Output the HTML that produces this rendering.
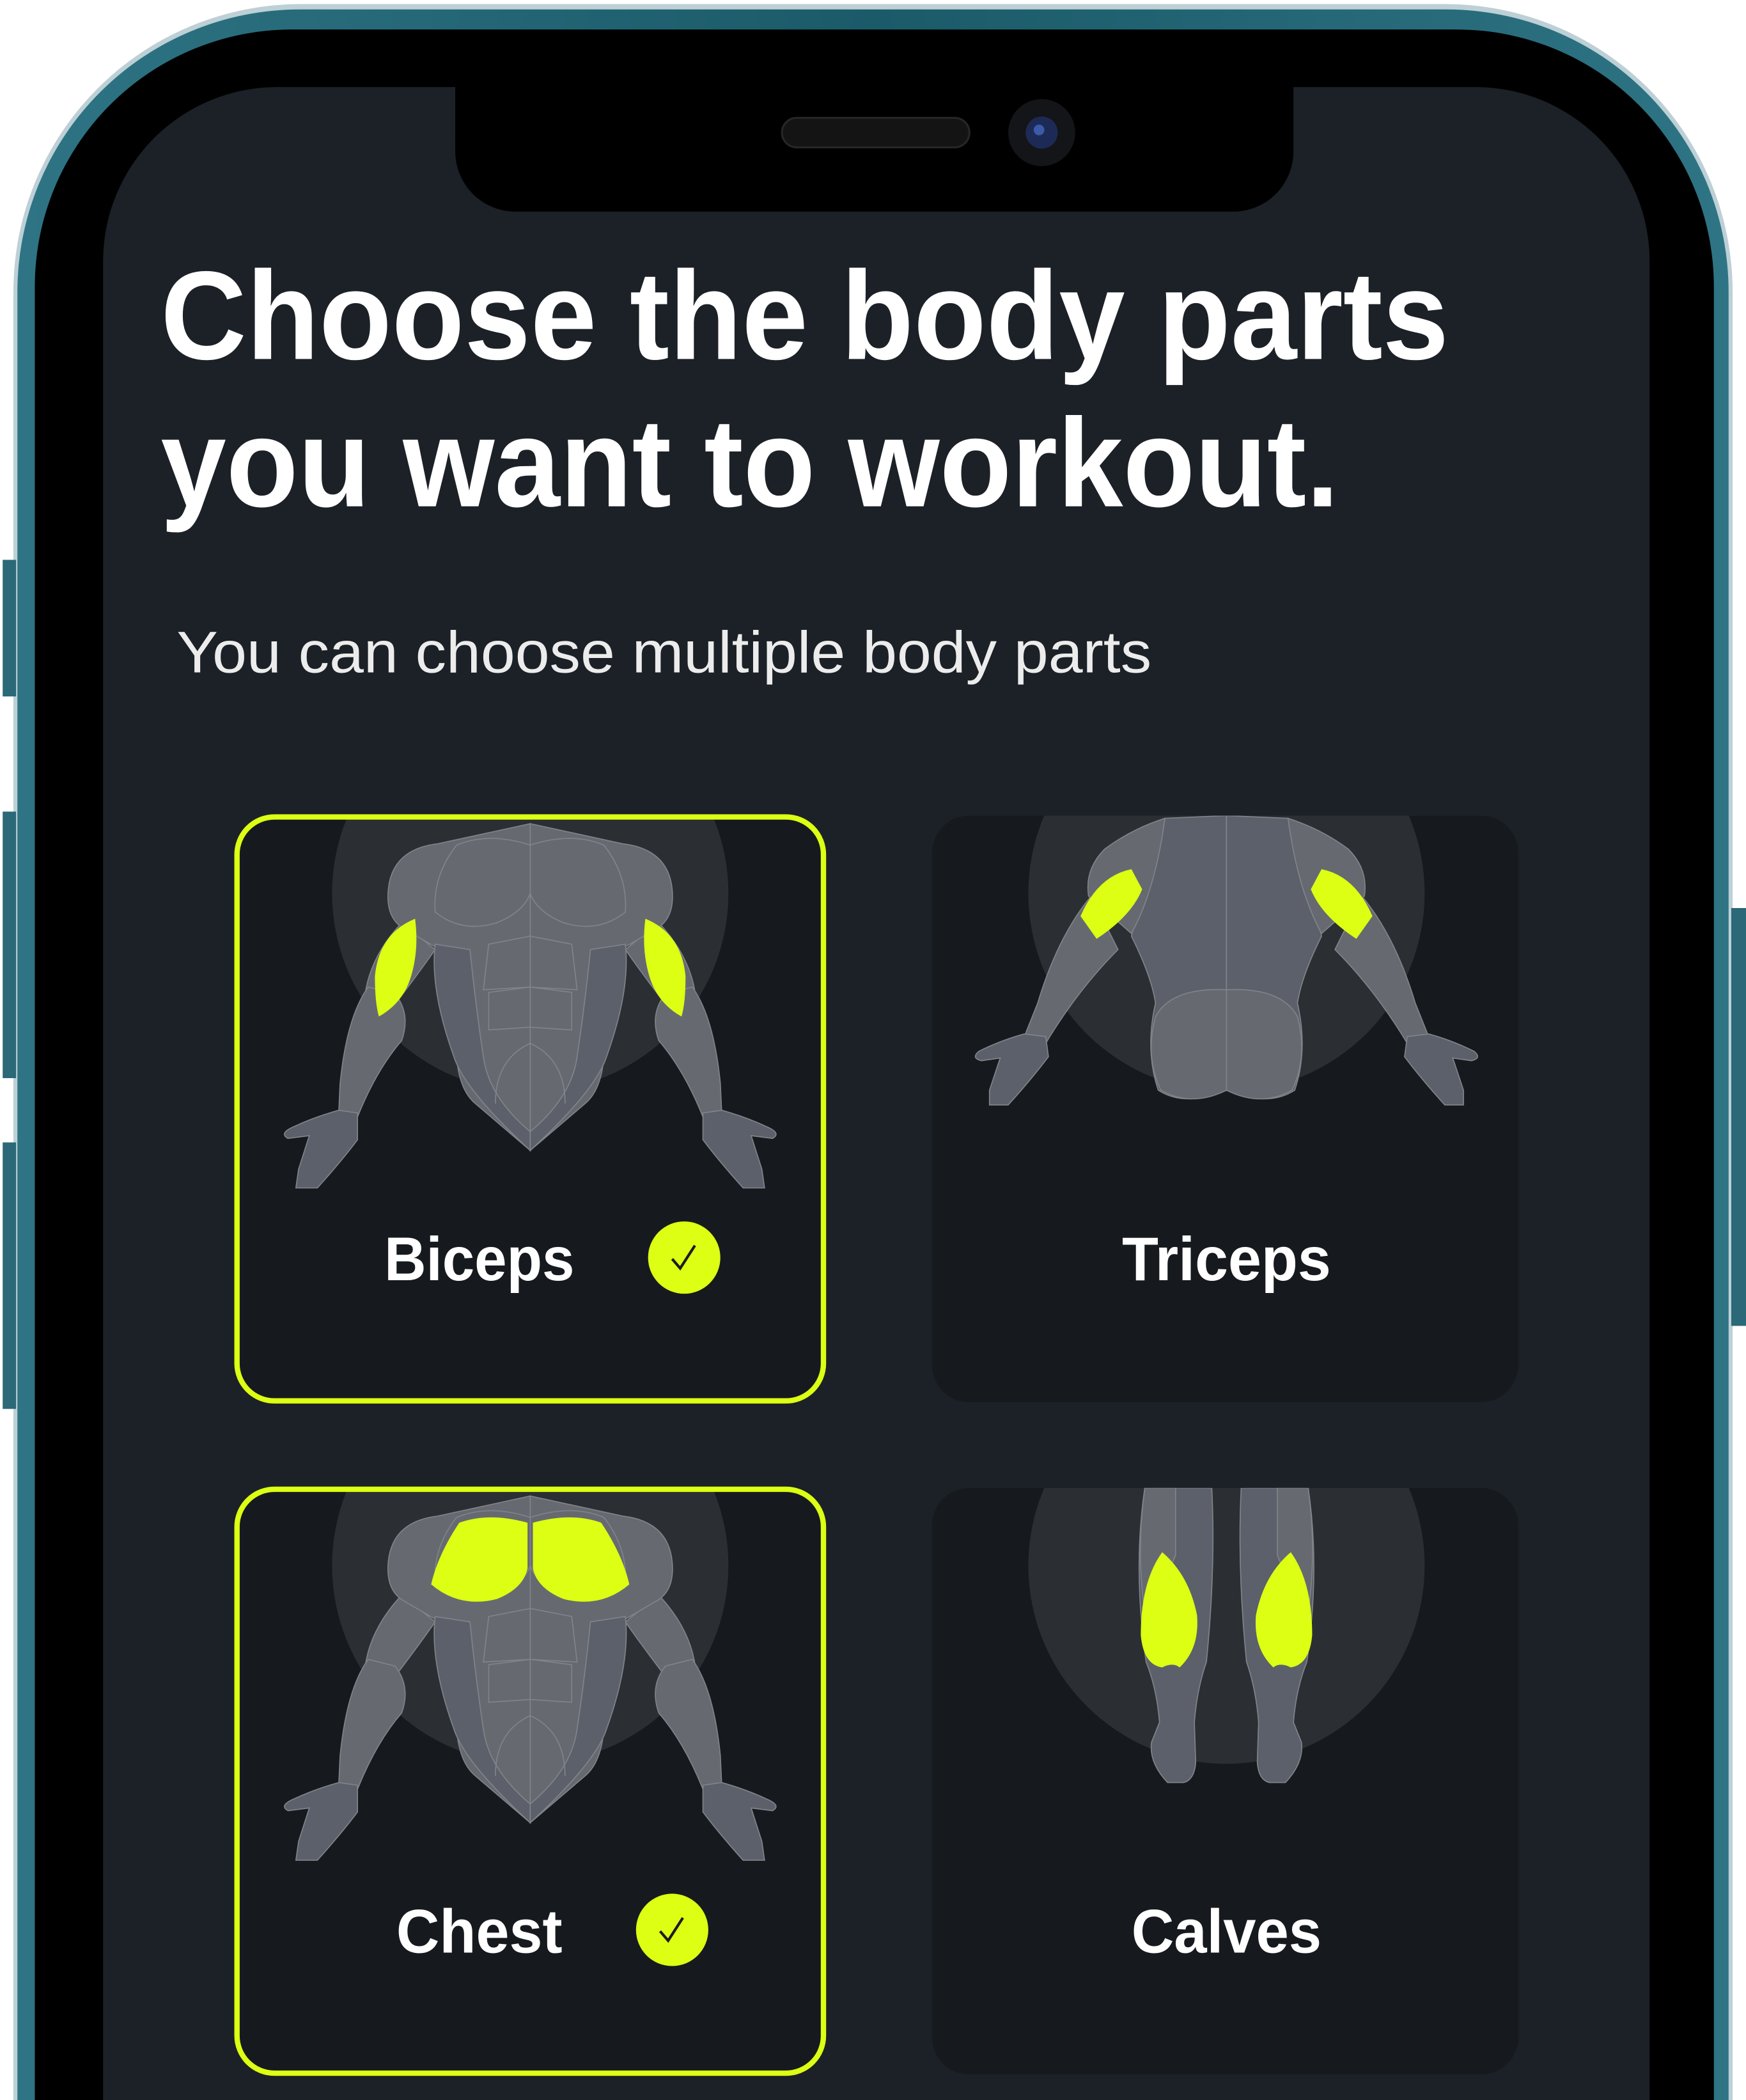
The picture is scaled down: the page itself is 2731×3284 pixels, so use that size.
<!DOCTYPE html>
<html style="height:3284px"><head><meta charset="utf-8"><style>html,body{margin:0;padding:0;background:#fff;overflow:hidden;width:2731px;height:3284px}svg{display:block}</style></head>
<body>
<svg width="2731" height="3284" viewBox="0 0 1304 1568" xmlns="http://www.w3.org/2000/svg">
<defs>
<linearGradient id="teal" x1="0" y1="0" x2="1" y2="0">
<stop offset="0" stop-color="#2e7484"/><stop offset="0.5" stop-color="#1b5a69"/><stop offset="1" stop-color="#2e7484"/>
</linearGradient>
<g id="frontHalf" stroke="#80848a" stroke-width="0.8">
<path d="M125,80 Q95,112 97,150 L116,146 Q136,120 150,100 Z" fill="#666a70"/>
<path d="M100,128 Q84,150 79,200 L78,222 L92,225 Q106,190 125,168 Q132,148 120,133 Z" fill="#666a70"/>
<path d="M92,222 L78,220 Q60,225 45,232 Q33,237 40,241 L56,239 L48,264 L46,278 L62,278 Q80,258 92,242 Z" fill="#5b606a"/>
<path d="M221,6 L152,21 Q118,25 115,55 Q113,76 126,84 L150,98 Q158,140 166,180 Q168,205 180,215 L221,250 Z" fill="#666a70"/>
<path d="M150,96 Q146,130 164,180 Q172,205 221,250 L221,236 Q190,210 186,180 Q180,140 176,100 Z" fill="#5b606a"/>
<path d="M221,22 Q190,12 166,22 Q148,45 150,72 Q170,88 196,80 Q216,72 221,58 Z" fill="#666a70"/>
<path d="M221,90 L190,96 L186,130 L221,128 M221,128 L190,132 L190,160 L221,158 M221,170 Q195,182 195,215" fill="none"/>
</g>
<g id="backHalf" stroke="#80848a" stroke-width="0.8">
<path d="M120,60 Q95,90 80,140 L70,165 L86,170 Q110,130 140,100 Z" fill="#666a70"/>
<path d="M86,165 L70,163 Q52,168 36,176 Q30,181 38,183 L52,181 L44,205 L44,216 L58,216 Q76,196 88,180 Z" fill="#5b606a"/>
<path d="M221,0 L175,2 Q160,20 160,45 L150,90 Q165,120 168,140 Q160,175 170,205 Q190,218 221,205 Z" fill="#5b606a"/>
<path d="M175,2 Q150,10 130,25 Q115,40 118,60 L150,88 Q168,55 175,2 Z" fill="#666a70"/>
<path d="M221,130 Q180,128 168,150 Q160,180 172,205 Q195,218 221,205 Z" fill="#666a70"/>
</g>
<g id="legHalf" stroke="#80848a" stroke-width="0.8">
<path d="M159,0 L209,0 Q212,60 205,130 Q198,150 196,175 L197,205 Q196,218 188,220 L176,220 Q162,205 164,190 L170,175 Q168,150 160,130 Q150,60 159,0 Z" fill="#5b606a"/>
<path d="M159,0 L182,0 L182,50 Q170,80 160,100 Q152,50 159,0 Z" fill="#666a70"/>
</g>
</defs>

<path d="M10,1568 V218 A215,215 0 0 1 225,3 H1079 A215,215 0 0 1 1294,218 V1568 Z" fill="#bdd0d6"/>
<path d="M13,1568 V218 A211,211 0 0 1 224,7 H1080 A211,211 0 0 1 1291,218 V1568 Z" fill="url(#teal)"/>
<path d="M26,1568 V214 A192,192 0 0 1 218,22 H1088 A192,192 0 0 1 1280,214 V1568 Z" fill="#000"/>
<rect x="2" y="418" width="10" height="102" fill="#2b6878"/>
<rect x="2" y="606" width="10" height="199" fill="#2b6878"/>
<rect x="2" y="853" width="10" height="199" fill="#2b6878"/>
<rect x="1293" y="678" width="11" height="312" fill="#2b6878"/>
<path d="M77,1568 V195 A130,130 0 0 1 207,65 H1102 A130,130 0 0 1 1232,195 V1568 Z" fill="#1c2127"/>
<rect x="340" y="60" width="626" height="98" rx="45" fill="#000"/>
<rect x="340" y="60" width="626" height="50" fill="#000"/>
<rect x="584" y="88" width="140" height="22" rx="11" fill="#141414" stroke="#262626" stroke-width="1.5"/>
<circle cx="778" cy="99" r="25" fill="#141518"/>
<circle cx="778" cy="99" r="12" fill="#1d2a55"/>
<circle cx="776" cy="97" r="4" fill="#3b5aa8"/>

<g font-family="'Liberation Sans', sans-serif" fill="#fff">
<text x="120" y="268" font-size="94" font-weight="bold" textLength="962" lengthAdjust="spacingAndGlyphs">Choose the body parts</text>
<text x="120" y="378" font-size="94" font-weight="bold" textLength="880" lengthAdjust="spacingAndGlyphs">you want to workout.</text>
<text x="132" y="502" font-size="44" fill="#ececec" textLength="728" lengthAdjust="spacingAndGlyphs">You can choose multiple body parts</text>
</g>

<svg x="175" y="609" width="441" height="438">
<rect width="441" height="438" rx="28" fill="#161a1e"/>
<circle cx="221" cy="58" r="148" fill="#2b2f34"/>
<use href="#frontHalf"/>
<use href="#frontHalf" transform="translate(442,0) scale(-1,1)"/>
<path d="M135,77 Q108,88 105,120 Q105,140 108,150 Q126,140 132,120 Q138,100 135,77 Z" fill="#dcff14"/>
<path d="M307,77 Q334,88 337,120 Q337,140 334,150 Q316,140 310,120 Q304,100 307,77 Z" fill="#dcff14"/>
</svg>
<rect x="177" y="610" width="438" height="436" rx="28" fill="none" stroke="#dcff14" stroke-width="4"/>

<svg x="696" y="609" width="438" height="438">
<rect width="438" height="438" rx="28" fill="#161a1e"/>
<circle cx="220" cy="58" r="148" fill="#2b2f34"/>
<g transform="translate(-1,0)">
<use href="#backHalf"/>
<use href="#backHalf" transform="translate(442,0) scale(-1,1)"/>
<path d="M150,40 Q125,45 112,75 L124,92 Q150,75 158,55 Z" fill="#dcff14"/>
<path d="M292,40 Q317,45 330,75 L318,92 Q292,75 284,55 Z" fill="#dcff14"/>
</g>
</svg>

<svg x="175" y="1111" width="441" height="438">
<rect width="441" height="438" rx="28" fill="#161a1e"/>
<circle cx="221" cy="58" r="148" fill="#2b2f34"/>
<use href="#frontHalf"/>
<use href="#frontHalf" transform="translate(442,0) scale(-1,1)"/>
<path d="M219,26 Q190,18 168,26 Q152,50 147,72 Q168,90 196,83 Q216,75 219,60 Z" fill="#dcff14"/>
<path d="M223,26 Q252,18 274,26 Q290,50 295,72 Q274,90 246,83 Q226,75 223,60 Z" fill="#dcff14"/>
</svg>
<rect x="177" y="1112" width="438" height="436" rx="28" fill="none" stroke="#dcff14" stroke-width="4"/>

<svg x="696" y="1111" width="438" height="438">
<rect width="438" height="438" rx="28" fill="#161a1e"/>
<circle cx="220" cy="58" r="148" fill="#2b2f34"/>
<use href="#legHalf"/>
<use href="#legHalf" transform="translate(440,0) scale(-1,1)"/>
<path d="M172,48 Q156,70 156,110 Q158,132 172,134 Q180,130 185,134 Q200,120 198,95 Q192,65 172,48 Z" fill="#dcff14"/>
<path d="M268,48 Q284,70 284,110 Q282,132 268,134 Q260,130 255,134 Q240,120 242,95 Q248,65 268,48 Z" fill="#dcff14"/>
</svg>

<g font-family="'Liberation Sans', sans-serif" font-size="46" font-weight="bold" fill="#fff" text-anchor="middle">
<text x="358" y="956" textLength="142" lengthAdjust="spacingAndGlyphs">Biceps</text>
<text x="916" y="956" textLength="156" lengthAdjust="spacingAndGlyphs">Triceps</text>
<text x="358" y="1458" textLength="124" lengthAdjust="spacingAndGlyphs">Chest</text>
<text x="916" y="1458" textLength="142" lengthAdjust="spacingAndGlyphs">Calves</text>
</g>
<circle cx="511" cy="939" r="27" fill="#dcff14"/>
<path d="M502,940 L508,947 L519,930" fill="none" stroke="#1a1c1e" stroke-width="2"/>
<circle cx="502" cy="1441" r="27" fill="#dcff14"/>
<path d="M493,1442 L499,1449 L510,1432" fill="none" stroke="#1a1c1e" stroke-width="2"/>
</svg>
</body></html>
